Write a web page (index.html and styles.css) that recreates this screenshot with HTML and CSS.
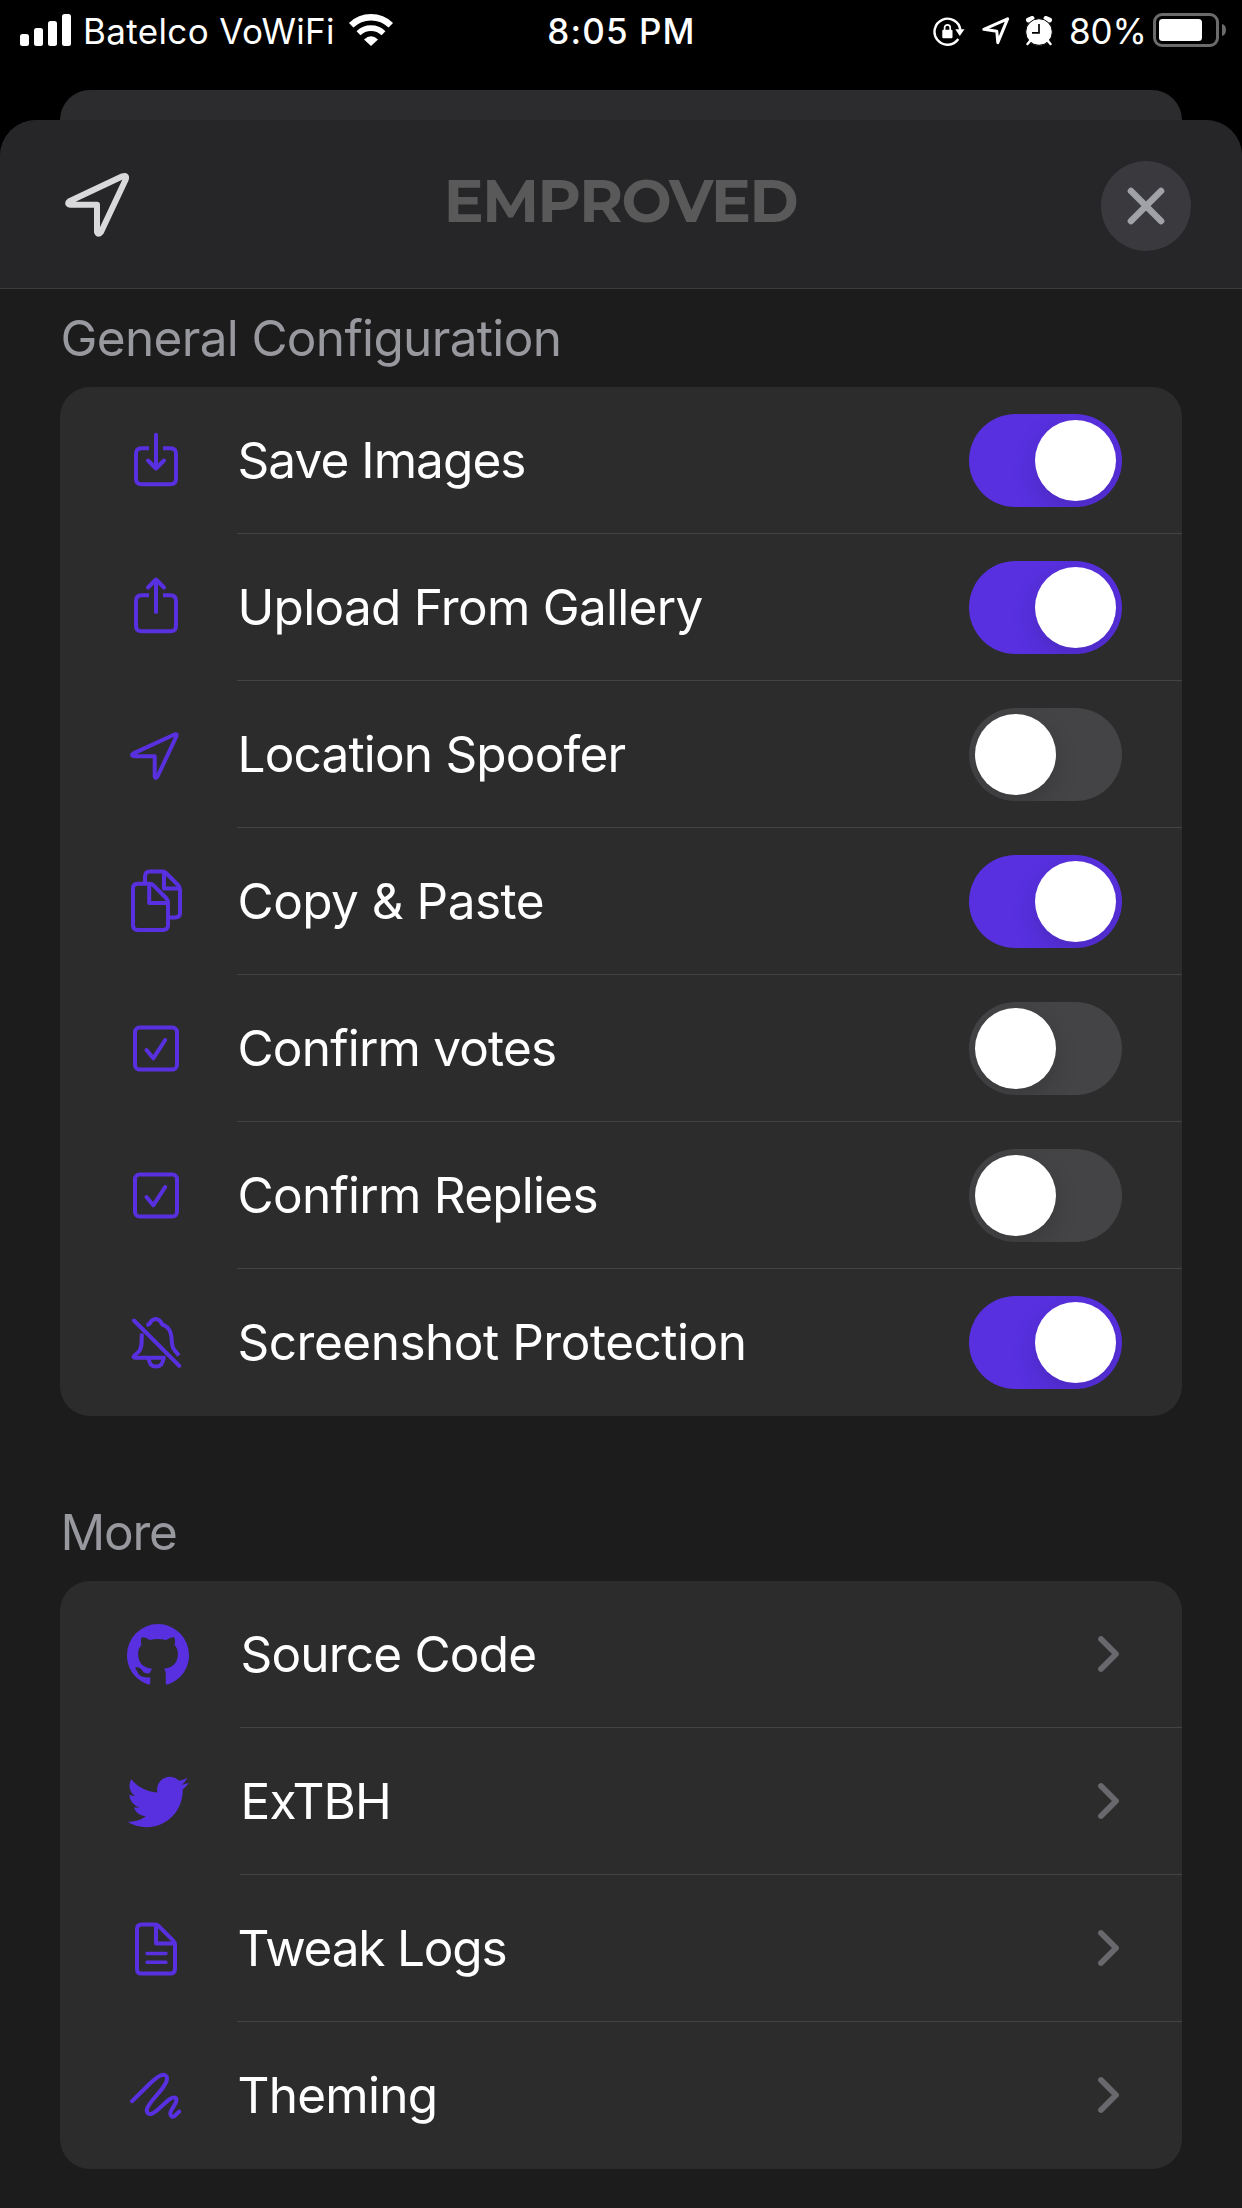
FILE: index.html
```html
<!DOCTYPE html>
<html lang="en">
<head>
<meta charset="utf-8">
<title>Emproved</title>
<link rel="stylesheet" href="styles.css">
</head>
<body>
<div class="screen">
  <header class="status">
    <div class="status-left">
      <svg class="signal" width="51" height="32" viewBox="0 0 51 32" fill="#fff"><rect y="20" width="9" height="12" rx="2.5"/><rect x="14" y="14" width="9" height="18" rx="2.5"/><rect x="28" y="7" width="9" height="25" rx="2.5"/><rect x="42" width="9" height="32" rx="2.5"/></svg>
      <span class="carrier">Batelco VoWiFi</span>
      <svg class="wifi" width="46" height="33" viewBox="0 0 46 33" fill="none" stroke="#fff"><path d="M3.2 12.2A28.5 28.5 0 0 1 42.8 12.2" stroke-width="6.4"/><path d="M10.500 20.2A18 18 0 0 1 35.500 20.2" stroke-width="5.6"/><path d="M16 26.4Q23 20 30 26.4L23 33Z" fill="#fff" stroke="none"/></svg>
    </div>
    <span class="time">8:05 PM</span>
    <div class="status-right">
      <svg class="rotation" width="32" height="30" viewBox="0 0 32 30"><path d="M25.3 22A13 13 0 1 1 27.4 13" fill="none" stroke="#fff" stroke-width="2.4"/><path d="M22.3 12.2H31.5L26.8 19Z" fill="#fff"/><rect x="9.3" y="12.8" width="10.2" height="8.4" rx="1" fill="#fff"/><path d="M11.6 13V10.6a2.8 2.8 0 0 1 5.6 0V13" fill="none" stroke="#fff" stroke-width="1.7"/></svg>
      <svg class="gps" width="28" height="28" viewBox="0 0 28 28"><path d="M1.8 12.3L25.6 1.9L15.8 25.6L14.8 14.3Z" fill="none" stroke="#fff" stroke-width="3" stroke-linejoin="round"/></svg>
      <svg class="alarm" width="28" height="30" viewBox="0 0 28 30"><path d="M3.5 4L7 2.5M24.5 4L21 2.5" stroke="#fff" stroke-width="5" stroke-linecap="round"/><circle cx="14" cy="16" r="13.300" fill="#fff" stroke="#000" stroke-width="1"/><path d="M5 25L2.5 28M23 25L25.5 28" stroke="#fff" stroke-width="2.5" stroke-linecap="round"/><path d="M14 8V16.8H7" fill="none" stroke="#000" stroke-width="1.7"/></svg>
      <span class="percent">80%</span>
      <svg class="battery" width="74" height="34" viewBox="0 0 74 34"><rect x="1.5" y="1.5" width="63" height="31" rx="7.5" fill="none" stroke="#6b6b6b" stroke-width="3"/><rect x="6" y="6" width="43" height="22" rx="3.5" fill="#fff"/><path d="M69 11Q73 12 73 17T69 23Z" fill="#6b6b6b"/></svg>
    </div>
  </header>
  <div class="sheet-behind"></div>
  <main class="sheet">
    <div class="nav">
      <svg class="nav-arrow" width="66" height="66" viewBox="0 0 66 66"><path d="M5.500 29.200L58.500 4.300Q63.300 2.800 61.700 7.500L37 60Q34.500 63.500 33 60V32.700H6Q2.500 31.500 5.500 29.200Z" fill="none" stroke="#d9d9db" stroke-width="6" stroke-linejoin="round"/></svg>
      <h1 class="brand">EMPROVED</h1>
      <button class="close" aria-label="Close"><svg width="38" height="38" viewBox="0 0 38 38"><path d="M4 4L34 34M34 4L4 34" stroke="#a1a1a8" stroke-width="6.600" stroke-linecap="round"/></svg></button>
    </div>
    <section class="group">
      <h2 class="heading general">General Configuration</h2>
      <div class="card">
        <div class="row"><svg class="icon" viewBox="0 0 72 72"><path stroke-linecap="butt" d="M29 23.200H21.500Q16 23.200 16 28.700V54Q16 59.300 21.500 59.300H50.500Q56 59.300 56 54V28.700Q56 23.200 50.500 23.200H43"/><path d="M36 9.700V43M28 35.500L36 43.500L44 35.500"/></svg><div class="cell"><span class="label l1">Save Images</span><i class="toggle on"></i></div></div>
        <div class="row"><svg class="icon" viewBox="0 0 72 72"><path stroke-linecap="butt" d="M29 23.200H21.500Q16 23.200 16 28.700V54Q16 59.300 21.500 59.300H50.500Q56 59.300 56 54V28.700Q56 23.200 50.500 23.200H43"/><path d="M36 40V8M28 15.500L36 7.500L44 15.500"/></svg><div class="cell"><span class="label l2">Upload From Gallery</span><i class="toggle on"></i></div></div>
        <div class="row"><svg class="icon" viewBox="0 0 72 72"><path d="M13.500 34.400L54.500 15.500Q57.500 14.400 56.300 17.500L37.500 57.500Q35.500 60.500 34.700 57.500V37.200H13.500Q10.500 36 13.500 34.400Z"/></svg><div class="cell"><span class="label l3">Location Spoofer</span><i class="toggle"></i></div></div>
        <div class="row"><svg class="icon" viewBox="0 0 72 72"><path d="M25 17V10.500Q25 5.500 30 5.500H42.500Q44.500 5.500 46 7L58 19Q60 21 60 23.500V46.500Q60 51.500 55 51.500H48M44 6V22.500H59.500"/><path d="M17.700 17.800H30Q32 17.800 33.500 19.300L46 32Q48 34 48 36V59Q48 64 43 64H17.700Q13 64 13 59V22.500Q13 17.800 17.700 17.800ZM29.200 18.500V37H47.500"/></svg><div class="cell"><span class="label l4">Copy &amp; Paste</span><i class="toggle on"></i></div></div>
        <div class="row"><svg class="icon" viewBox="0 0 72 72"><rect x="15" y="14.500" width="42" height="42" rx="4.500"/><path d="M26.500 37L33.300 45.300L45.200 27"/></svg><div class="cell"><span class="label l5">Confirm votes</span><i class="toggle"></i></div></div>
        <div class="row"><svg class="icon" viewBox="0 0 72 72"><rect x="15" y="14.500" width="42" height="42" rx="4.500"/><path d="M26.500 37L33.300 45.300L45.200 27"/></svg><div class="cell"><span class="label l6">Confirm Replies</span><i class="toggle"></i></div></div>
        <div class="row"><svg class="icon" viewBox="0 0 72 72"><path d="M14 13.500L59.300 58.800"/><path stroke-linecap="butt" d="M26.500 18Q30 17.500 30.500 15Q35.700 9 41 15Q41.500 17.500 44.500 18.500Q50.500 21.500 51.500 30C52 40.500 52 40.500 59 48.500M21.800 26.500C21.500 34 22.500 41 18.500 45Q11 50.700 15 50.700H45.500"/><path stroke-linecap="butt" d="M28.700 50.500Q29 59.500 36 59.500T43.500 50.500"/></svg><div class="cell"><span class="label l7">Screenshot Protection</span><i class="toggle on"></i></div></div>
      </div>
    </section>
    <section class="group">
      <h2 class="heading more">More</h2>
      <div class="card links">
        <div class="row"><svg class="logo" viewBox="0 0 24 24"><path d="M12 0A12.050 12.050 0 0 0 0 12.200C0 17.400 3.500 22 8.400 23.400Q9 23.500 9 22.800V20.600C6.200 21 4.800 20.200 4 18.500C3.700 17.700 3.200 17.300 3.200 16.900C4.800 16.400 5.500 17.600 6.200 18.400C7 19.300 8.100 19.300 9 18.900C9.100 18.200 9.400 17.600 9.800 17.300C6.700 17 4.300 15.500 4.300 11.400C4.300 10 4.800 8.900 5.600 8.100C5.300 7.200 5.300 6 5.700 5.100C6.700 5 7.800 5.500 8.900 6.200Q12 5.400 15.100 6.200C16.200 5.500 17.300 5 18.300 5.100C18.700 6 18.700 7.200 18.400 8.100C19.200 8.900 19.700 10 19.700 11.400C19.700 15.500 17.300 17 14.300 17.300C14.700 17.700 15 18.500 15 19.400V22.800Q15 23.500 15.600 23.400C20.500 22 24 17.400 24 12.200A12.050 12.050 0 0 0 12 0Z"/></svg><div class="cell"><span class="label m1">Source Code</span><svg class="chevron" viewBox="0 0 24 38"><path d="M3 4L18 19L3 34"/></svg></div></div>
        <div class="row"><svg class="logo" viewBox="0 0 24 24"><path d="M23.953 4.570a10 10 0 01-2.825.775 4.958 4.958 0 002.163-2.723c-.951.555-2.005.959-3.127 1.184a4.920 4.920 0 00-8.384 4.482C7.690 8.095 4.067 6.130 1.640 3.162a4.822 4.822 0 00-.666 2.475c0 1.710.870 3.213 2.188 4.096a4.904 4.904 0 01-2.228-.616v.060a4.923 4.923 0 003.946 4.827 4.996 4.996 0 01-2.212.085 4.936 4.936 0 004.604 3.417 9.867 9.867 0 01-6.102 2.105c-.390 0-.779-.023-1.170-.067a13.995 13.995 0 007.557 2.209c9.053 0 13.998-7.496 13.998-13.985 0-.210 0-.420-.015-.630A9.935 9.935 0 0024 4.590z"/></svg><div class="cell"><span class="label m2">ExTBH</span><svg class="chevron" viewBox="0 0 24 38"><path d="M3 4L18 19L3 34"/></svg></div></div>
        <div class="row"><svg class="icon" viewBox="0 0 72 72"><path d="M21.500 11.400H35Q37 11.400 38.500 12.900L53 27.400Q55 29.400 55 31.500V55.500Q55 60.600 50 60.600H21.500Q17 60.600 17 56V16Q17 11.400 21.500 11.400ZM36 12V30.500H54"/><path stroke-width="3.400" d="M27 40.500H46M27 49.200H46"/></svg><div class="cell"><span class="label m3">Tweak Logs</span><svg class="chevron" viewBox="0 0 24 38"><path d="M3 4L18 19L3 34"/></svg></div></div>
        <div class="row"><svg class="icon" viewBox="0 0 72 72"><path d="M12 41.200L30 23.500C37 17 41.500 14 44.500 15C48.500 16.500 47.500 21.500 43 27.500C38 34.500 31 40.500 27.500 47.500C25.500 52 28 54.500 31 54C36 53 44 43 50 39C54 36.500 57 37.500 56.300 41C55.500 45 50.500 50 50.300 53.500C50.300 56.500 52.500 57.300 54.500 56L59.300 51.500"/></svg><div class="cell"><span class="label m4">Theming</span><svg class="chevron" viewBox="0 0 24 38"><path d="M3 4L18 19L3 34"/></svg></div></div>
      </div>
    </section>
  </main>
</div>
</body>
</html>
```
FILE: styles.css
```css
* { box-sizing: border-box; }
body { margin: 0; background: #000; font-family: Inter, "Liberation Sans", sans-serif; color: #fff; }
.screen { width: 1242px; height: 2208px; overflow: hidden; display: flex; flex-direction: column; }
svg { display: block; flex: none; }
.status { height: 90px; flex: none; display: grid; grid-template-columns: 1fr auto 1fr; padding: 12px 15px 0 20px; line-height: 38px; font-size: 35px; white-space: nowrap; }
.status-left, .status-right { display: flex; align-items: flex-start; }
.status-right { justify-content: flex-end; }
.signal { margin-top: 2px; }
.carrier { margin-left: 12px; letter-spacing: 0.35px; }
.wifi { margin: 1px 0 0 13px; }
.time { margin: 0 2px 0 -2px; font-weight: 500; letter-spacing: 1.1px; }
.rotation { margin: 5px 17px 0 0; }
.gps { margin: 5px 15px 0 0; }
.alarm { margin: 4px 16px 0 0; }
.percent { margin-right: 6px; }
.battery { margin-top: 1px; }
.sheet-behind { flex: none; height: 30px; margin: 0 60px; background: #2c2c2e; border-radius: 30px 30px 0 0; }
.sheet { flex: 1; background: #1c1c1c; border-radius: 36px 36px 0 0; overflow: hidden; }
.nav { height: 169px; background: #262628; border-bottom: 1px solid #3d3d3f; padding: 0 51px 0 64px; display: flex; align-items: flex-start; justify-content: space-between; }
.nav-arrow { margin-top: 52px; }
.brand { margin: 51px 0 0 10px; font: 700 59.500px/60px Montserrat, "Open Sans", Inter, sans-serif; color: #595959; letter-spacing: -1.4px; }
.close { margin: 41px 0 0; width: 90px; height: 90px; border: 0; padding: 0; border-radius: 50%; background: #3a3a3e; display: flex; align-items: center; justify-content: center; }
.group { padding: 0 60px; }
.heading { margin: 0; height: 98px; padding: 19px 0 0 0.5px; font-size: 49.500px; line-height: 60px; font-weight: 400; color: #98989f; }
.group + .group .heading { height: 165px; padding-top: 86px; }
.general { letter-spacing: -0.67px; }
.more { letter-spacing: -1.2px; }
.card { background: #2c2c2c; border-radius: 30px; overflow: hidden; }
.row { height: 147px; display: flex; align-items: center; padding-left: 60px; }
.icon { width: 72px; height: 72px; margin-right: 45px; fill: none; stroke: #5830e0; stroke-width: 4; stroke-linecap: round; stroke-linejoin: round; }
.logo { width: 62px; height: 62px; margin: 0 51.500px 0 6.500px; fill: #5830e0; }
.cell { flex: 1; height: 147px; border-bottom: 1px solid #434345; display: flex; align-items: center; justify-content: space-between; padding-right: 60px; }
.row:last-child .cell { border-bottom-color: transparent; }
.label { padding-left: 0.5px; font-size: 49.500px; line-height: 60px; white-space: nowrap; }
.l1 { letter-spacing: -0.93px; }
.l2 { letter-spacing: -0.72px; }
.l3 { letter-spacing: -0.82px; }
.l4 { letter-spacing: -0.52px; }
.l5 { letter-spacing: -0.8px; }
.l6 { letter-spacing: -0.73px; }
.l7 { letter-spacing: -0.48px; }
.m1 { letter-spacing: -0.8px; }
.m2 { letter-spacing: -0.85px; }
.m3 { letter-spacing: -1.2px; }
.m4 { letter-spacing: -0.75px; }
.toggle { width: 153px; height: 93px; padding: 6px; border-radius: 47px; background: #444446; display: flex; overflow: hidden; }
.toggle.on { background: #5830e0; justify-content: flex-end; }
.toggle::before { content: ""; width: 81px; height: 81px; border-radius: 50%; background: #fff; box-shadow: 0 9px 24px rgba(0,0,0,.15); }
.chevron { width: 24px; height: 38px; fill: none; stroke: #69686c; stroke-width: 5.800; stroke-linecap: round; stroke-linejoin: round; }
```
